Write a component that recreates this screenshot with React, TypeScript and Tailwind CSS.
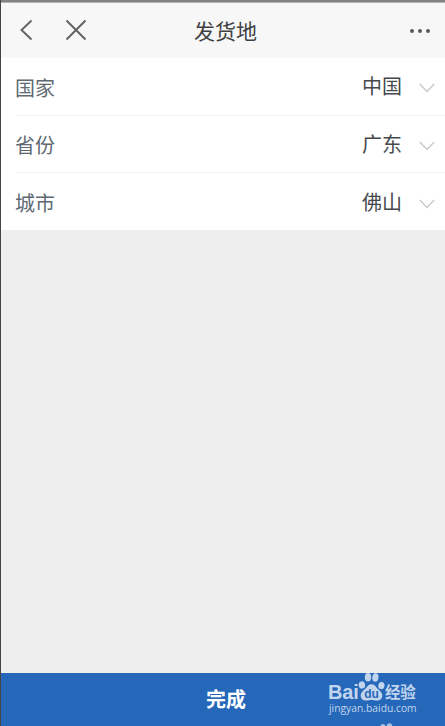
const rows = [
  { label: '国家', value: '中国' },
  { label: '省份', value: '广东' },
  { label: '城市', value: '佛山' },
];

function Paw() {
  return (
    <svg viewBox="0 0 27 30" className="h-[30px] w-[27px] shrink-0" fill="#c1d5ee">
      <ellipse cx="3.900" cy="13" rx="3.200" ry="3.700" transform="rotate(-12 3.900 13)" />
      <ellipse cx="10" cy="5.200" rx="3.200" ry="4.200" />
      <ellipse cx="17.400" cy="5.500" rx="3.100" ry="4.200" transform="rotate(8 17.400 5.500)" />
      <ellipse cx="23.400" cy="13.600" rx="3.100" ry="3.600" transform="rotate(12 23.400 13.600)" />
      <path d="M13.500 12.200c2.700 0 3.900 1.800 5.200 3.500 2.200 2.500 5.600 4.200 5.600 7.900 0 3.200-2.500 5.200-5.500 5-2.100-.1-3.400-.6-5.300-.6s-3.200.5-5.300.6c-3 .2-5.500-1.800-5.500-5 0-3.700 3.400-5.400 5.500-7.900 1.400-1.700 2.600-3.500 5.300-3.500z" />
      <text x="13.600" y="25.500" textAnchor="middle" fontSize="12" fontWeight="700" fontFamily="Liberation Sans, sans-serif" fill="#2868b8">du</text>
    </svg>
  );
}

function Watermark() {
  return (
    <div className="absolute top-0 left-[327px] h-full w-[100px] overflow-visible text-[#c1d5ee]">
      <div className="flex h-[29px] items-start">
        <span className="mt-[8px] w-[31px] font-['Liberation_Sans',sans-serif] text-[20px] leading-[22px] font-bold tracking-[-0.2px]">Bai</span>
        <span className="-mt-[1px] -ml-[1px]"><Paw /></span>
        <span className="mt-[7px] whitespace-nowrap text-[15.500px] leading-[22px] font-bold tracking-[-0.3px]">经验</span>
      </div>
      <div className="-mt-[1px] ml-[1px] font-['Open_Sans','Noto_Sans',sans-serif] text-[10.300px] leading-[14px]">jingyan.baidu.com</div>
      <svg viewBox="0 0 16 3" className="absolute top-[50px] left-[51px] h-[3px] w-[16px]" fill="#a5c0e4">
        <ellipse cx="4" cy="4.300" rx="2.700" ry="3.200" />
        <ellipse cx="10.500" cy="3.500" rx="2.700" ry="3.200" />
      </svg>
    </div>
  );
}

export default function App() {
  return (
    <div className="flex h-[726px] w-[445px] flex-col overflow-hidden border-l border-[#434446] bg-[#eeeeee] font-['Noto_Sans_CJK_SC',sans-serif]">
      <div className="h-[3px] shrink-0 border-b border-[#b4b4b4] bg-[#838383]" />
      <header className="grid h-[55px] shrink-0 grid-cols-[1fr_auto_1fr] items-center bg-[#f7f7f7]">
        <div className="-mt-[1px] flex items-center pl-[18px] text-[#606163]">
          <svg viewBox="0 0 14 22" className="h-[22px] w-[14px]" fill="none" stroke="currentColor" strokeWidth="1.900">
            <path d="M12.500 1.500 2.500 11l10 9.500" />
          </svg>
          <svg viewBox="0 0 22 22" className="ml-[32px] h-[22px] w-[22px]" fill="none" stroke="currentColor" strokeWidth="1.900">
            <path d="m1.500 1.500 19 19m0-19-19 19" />
          </svg>
        </div>
        <h1 className="-mt-[2px] pl-[5px] text-[21px] leading-[30px] text-[#404143]">发货地</h1>
        <div className="flex justify-end gap-[4px] pt-[1px] pr-[15px]">
          <i className="h-[4px] w-[4px] rounded-full bg-[#5b5c5e]" />
          <i className="h-[4px] w-[4px] rounded-full bg-[#5b5c5e]" />
          <i className="h-[4px] w-[4px] rounded-full bg-[#5b5c5e]" />
        </div>
      </header>
      <main className="flex-1">
        <div className="bg-white pl-[15px]">
          {rows.map((row, i) => (
            <div key={row.label} className={i < 2 ? 'flex h-[57.500px] items-center border-b border-[#f2f2f2] pr-[10px]' : 'flex h-[57px] items-center pr-[10px]'}>
              <span className="mt-[3px] -ml-[1px] text-[20px] leading-[28px] text-[#606972]">{row.label}</span>
              <span className="ml-auto text-[20px] leading-[28px] text-[#45494d]">{row.value}</span>
              <svg viewBox="0 0 16 10" className="mt-[4px] ml-[17px] h-[10px] w-[16px]" fill="none" stroke="#c9c9c9" strokeWidth="1.400">
                <path d="m.8 1 7.200 7.500L15.200 1" />
              </svg>
            </div>
          ))}
        </div>
      </main>
      <button className="relative h-[53px] w-full shrink-0 bg-[#2567b9] text-left text-white">
        <span className="-mt-[2px] block pl-[6px] text-center text-[20px] leading-[50px] font-bold">完成</span>
        <Watermark />
      </button>
    </div>
  );
}
